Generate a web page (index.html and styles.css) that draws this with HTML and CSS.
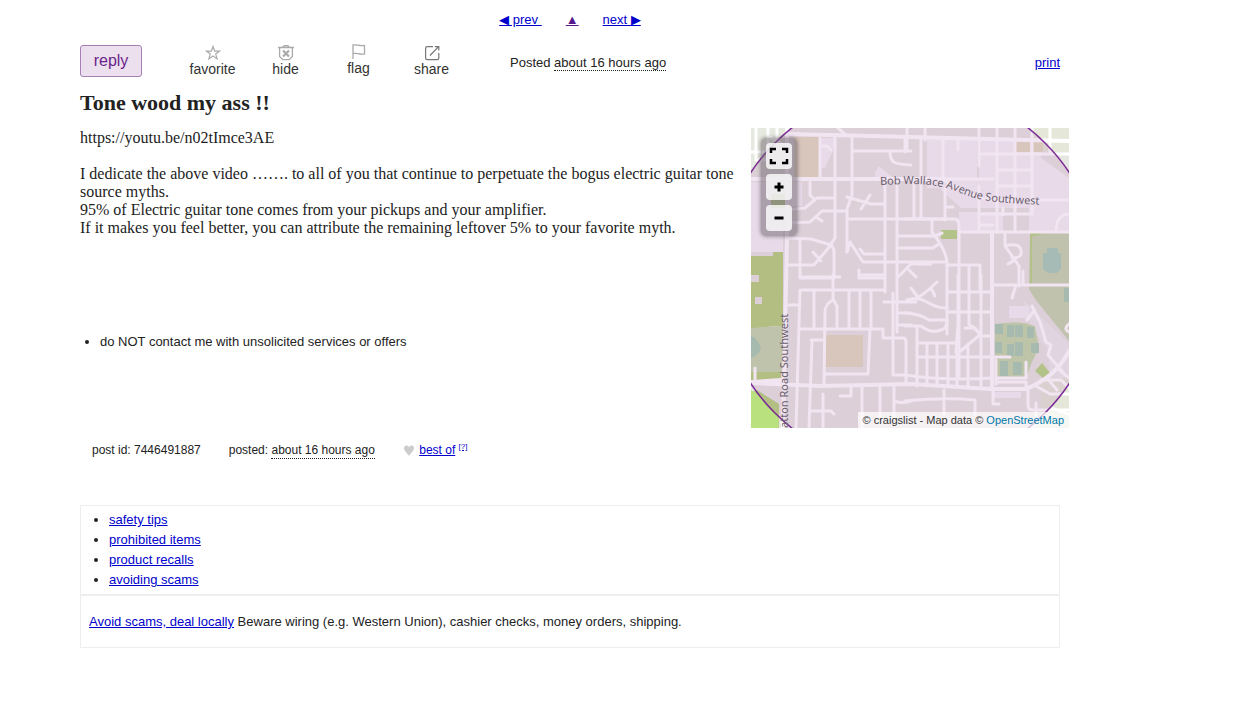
FILE: index.html
```html
<!DOCTYPE html>
<html lang="en">
<head>
  <meta charset="UTF-8">
  <meta name="viewport" content="width=device-width, initial-scale=1.0">
  <title>Tone wood my ass !!</title>
  <link rel="stylesheet" href="styles.css">
</head>
<body>
  <div class="page">
    <nav class="prevnext">
      <a href="#prev">◀ prev&nbsp;</a>
      <a href="#up" class="visited">▲</a>
      <a href="#next">next ▶</a>
    </nav>

    <header class="actions">
      <button type="button" class="reply">reply</button>
      <div class="tools">
        <button type="button" class="tool">
          <svg width="16" height="16" viewBox="0 0 16 16" fill="none" stroke="#aaa" stroke-width="1.2"><path d="M8 1.5l1.7 4.6h4.9l-3.9 3 1.4 4.8L8 11.1l-4.1 2.8 1.4-4.8-3.9-3h4.9z"/></svg>
          favorite
        </button>
        <button type="button" class="tool">
          <svg width="16" height="16" viewBox="0 0 16 16" fill="none" stroke="#aaa" stroke-width="1.3"><path d="M0 2.5h16M5 2c0-2 6-2 6 0M1.6 3v8.5l3.2 3.2h6.4l3.2-3.2V3"/><path d="M5 5.5l6 6M11 5.5l-6 6" stroke-width="2.2"/></svg>
          hide
        </button>
        <button type="button" class="tool raised">
          <svg width="16" height="16" viewBox="0 0 16 16" fill="none" stroke="#aaa" stroke-width="1.3"><path d="M2 15V1c4-1 6 1.500 11.500 .5v8.500C8 11 6 8.500 2 9.500"/></svg>
          flag
        </button>
        <button type="button" class="tool">
          <svg width="16" height="16" viewBox="0 0 16 16" fill="none" stroke="#777" stroke-width="1.2"><path d="M9 1.600H3.200Q1.600 1.600 1.600 3.200V13q0 1.600 1.600 1.600h10q1.600 0 1.600-1.600V8M6 10.500L14.600 1.600M10.800 1.600h4v4"/></svg>
          share
        </button>
      </div>
      <p class="posted">Posted <time>about 16 hours ago</time></p>
      <a href="#print" class="print">print</a>
    </header>

    <h1>Tone wood my ass !!</h1>

    <main class="posting">
      <div class="text">
        <section class="body">
          https://youtu.be/n02tImce3AE<br>
          <br>
          I dedicate the above video ……. to all of you that continue to perpetuate the bogus electric guitar tone source myths.<br>
          95% of Electric guitar tone comes from your pickups and your amplifier.<br>
          If it makes you feel better, you can attribute the remaining leftover 5% to your favorite myth.
        </section>
        <ul class="notices">
          <li>do NOT contact me with unsolicited services or offers</li>
        </ul>
      </div>

      <div class="map">
        <svg class="tiles" width="318" height="300" viewBox="0 0 318 300">
          <rect width="318" height="300" fill="#e7e7e2"/>
          <!-- commercial and open blocks -->
          <g fill="#f4f3f5">
            <path d="M0 54h32v70H0zM37 54h14v24H37zM176 10h50v42h26v20h-10l-14 8h-18l-22-20h-12zM228 12h62v60h28v32h-40V80h-50zM290 30l28 20v30h-28zM208 84h44v20h-44zM124 44l4-6 14 12h-18zM70 10h14v8l-10 22h-4zM258 178h20v12h-20zM242 264h28v6h-28z"/>
            <path d="M272 172l46 44v30l-20 20V224l-18-26z" opacity=".5"/>
          </g>
          <path d="M0 0h39v48H0z" fill="#e6e9df"/>
          <path d="M280 0h38v24h-38zM290 250h28v50h-28z" fill="#e5e8d9"/>
          <!-- parks -->
          <path d="M0 128h22v-4h10v74q-14 0-32 3z" fill="#b8d483"/>
          <path d="M20 66h14v14H20zM190 102h16v9h-16zM284 243l7-8 9 11-7 5zM302 104h16v13h-16z" fill="#b8d88a"/>
          <path d="M0 200l32-2v46H0z" fill="#c7dab0"/>
          <path d="M0 244h30v8H0zM6 262l22 14v24H0v-36z" fill="#b8d483"/>
          <path d="M0 262q16 12 27 27v11H0z" fill="#b9e27e"/>
          <path d="M279 104h39v109l-34-42-6-10z" fill="#c9d9b4"/>
          <path d="M279 104h14q-4 4-12 4v50h-2z" fill="#b8d88a"/>
          <path d="M244 196q24-4 40 2l4 22-8 16-5 14h-31z" fill="#c4dbac"/>
          <path d="M0 147h8v7H0zM4 169h7v7H4z" fill="#e7e7e2"/>
          <!-- pitches -->
          <path d="M296 120h11v5h3v16l-4 4h-9l-5-4v-16h4z" fill="#abd0bd"/>
          <path d="M0 208q7 2 10 12-3 8-10 10zM244 196h8v10h-8zM256 197h7v12h-7zM264 197h8v12h-8zM276 199h7v11h-7zM244 214h7v11h-7zM256 216h7v12h-7zM264 214h8v14h-8zM280 215h8v10h-8zM249 233h8v15h-8zM262 234h9v13h-9zM313 160h5v14h-5z" fill="#abd0b5"/>
          <!-- schools -->
          <path d="M43 9h26v41H43zM73 207h39v32H73zM265 12h14v12h-14zM282 12h10v12h-10z" fill="#e3dcc2"/>

          <g fill="none" stroke="#fff" stroke-width="3" stroke-linejoin="round" stroke-linecap="round">
            <!-- arterials -->
            <path stroke-width="4" d="M0 51H190M36 0v110l-4 190M0 255l70 3 90-2 80 5h35q30-12 43-38M241 104v157M0 254l30-2M318 13L160 9 39 6"/>
            <path d="M190 51C205 58 220 70 240 72H318M190 51h52M36 98h4"/>
            <!-- northwest -->
            <path d="M69 10v39M84 7v103l-4 6 3 6v28H49v-38M101 7v60l-5 14v43M101 23h59M139 24c0 12 6 12 21 13M87 0l8 7M70 18h6l4 4M5 0v32h12V0M17 8l14 8M26 0v20M0 24h14"/>
            <path d="M59 54v13l5 5M36 82l18-2 12-10h17M36 95l23-1 12-11h25M96 91h38M65 89l6 4M96 69l24 7h14M119 67l-9 14M36 110l24 1 20 6-17 20H36M62 124l8 9M99 114l13 20h21M99 114l-3 10M109 121l4 5h20M108 142v8h26M134 54v110"/>
            <path d="M146 52v152M134 91h60M146 108h38l7-3M146 120h36l6-4M134 134h60M146 150l14-14h20M158 142l7 7M163 52v38M170 90V12M192 10v39M181 92v12q14 18 15 30v72M194 60v32M194 79h8"/>
            <path d="M154 91h50q4 0 4 8v149M208 104h110M196 137h33v24M218 137v24M229 137v24M207 12v10M154 24v-14"/>
            <!-- northeast grid -->
            <path d="M228 0v38M246 0v104M264 0v104M281 0v86h-50M299 0v24M228 26h90M246 42h34M246 58h34M228 58v46M252 80v7M228 97h14M318 86q-13 0-13 18M174 0v12M156 0v22"/>
            <path d="M254 106v12l14 20v20M254 118q14-4 16 4t-9 8M264 132l-7 4M265 157l-4 13M241 157h77M272 157v-14M318 196q-6 5 0 8M281 178l8 16 6 20 5 3-3 10 14 16M282 184l-6 8"/>
            <!-- southwest grid -->
            <path d="M49 162l-4 138M50 162h84M63 162v38M49 201h83v9h20q3 0 3 4v43M82 147v24l4 7v22M82 172q-8 4-8 12l-1 73M98 162v38M109 162v38M120 162v38M119 201l-2 45H73M60 212h12M61 212l-3 88M37 177h12M142 165v82h13M49 149h40M110 147h24M133 174h32M146 185h14M146 197h14"/>
            <path d="M72 266v34M60 283h20l3 3M89 268h11v-9M111 259v41M129 259v30M143 259v30M143 273q8 3 17 0M4 240v11"/>
            <!-- south centre -->
            <path d="M156 172q10-4 20 2t18 6M154 185q16 1 24 7h18M154 198h16q10 8 20 4 6-1 6-10M160 174q14-8 26-20M166 168l-6-8M180 160l4 8M196 164h46M196 184h46M207 147v48l-2 30M218 160v36l12 10-24 20M230 147v110M214 200h10l6 8h12M166 200v58M166 215h40M176 216v42M186 216v42M197 216v42M206 226v32M217 216v42M166 229h74M154 247q40 6 87 3M154 273q40-4 70-1v14M193 262v24M241 229h18M245 232v24M245 250h30v-16M245 254h30v4M242 262v14h6"/>
            <path d="M277 260v18q0 4 6 4h35M285 258l14 8h19M296 250l10 12M306 240l12 10M290 252h20l8 8M285 275v18M300 280l18 6"/>
          </g>

          <circle cx="159" cy="150" r="191" fill="#800080" fill-opacity=".1" stroke="#7b2a96" stroke-width="1.500"/>

          <path id="bob-wallace" d="M129 57C170 55 185 56 205 63C225 71 230 75 300 77" fill="none"/>
          <path id="patton" d="M37 300V170" fill="none"/>
          <text class="road"><textPath href="#bob-wallace">Bob Wallace Avenue Southwest</textPath></text>
          <text class="road"><textPath href="#patton">atton Road Southwest</textPath></text>
        </svg>
        <div class="controls">
          <button type="button" aria-label="Full screen">
            <svg width="20" height="18" viewBox="0 0 20 18" fill="none" stroke="#000" stroke-width="2.500"><path d="M2 6V2h5M13 2h5v4M18 12v4h-5M7 16H2v-4"/></svg>
          </button>
          <button type="button" aria-label="Zoom in">
            <svg width="10" height="10" viewBox="0 0 10 10" stroke="#000" stroke-width="3"><path d="M5 .5v9M.5 5h9"/></svg>
          </button>
          <button type="button" aria-label="Zoom out">
            <svg width="10" height="10" viewBox="0 0 10 10" stroke="#000" stroke-width="3"><path d="M.5 5h9"/></svg>
          </button>
        </div>
        <p class="attribution">© craigslist - Map data © <a href="#osm">OpenStreetMap</a></p>
      </div>
    </main>

    <div class="postinginfos">
      <p>post id: 7446491887</p>
      <p>posted: <time>about 16 hours ago</time></p>
      <p class="bestof">
        <svg width="12" height="11" viewBox="0 0 12 11" fill="#ccc"><path d="M6 11C4 7.500 1 6 1 3 1 0 5-.5 6 2.500 7-.5 11 0 11 3c0 3-3 4.500-5 8z"/></svg>
        <a href="#best">best of</a> <a href="#about" class="help">[?]</a>
      </p>
    </div>

    <footer class="tips">
      <ul>
        <li><a href="#safety">safety tips</a></li>
        <li><a href="#prohibited">prohibited items</a></li>
        <li><a href="#recalls">product recalls</a></li>
        <li><a href="#scams">avoiding scams</a></li>
      </ul>
      <p><a href="#local">Avoid scams, deal locally</a> Beware wiring (e.g. Western Union), cashier checks, money orders, shipping.</p>
    </footer>
  </div>
</body>
</html>
```
FILE: styles.css
```css
/* General */
body {
  margin: 0;
  font-family: "Liberation Sans", Arial, sans-serif;
  font-size: 13px;
  line-height: 20px;
  color: #222;
  background: #fff;
}

.page {
  padding: 10px 186px 60px 80px;
}

p, ul, h1 {
  margin: 0;
}

a {
  color: #0000cc;
}

a.visited {
  color: #551a8b;
}

button {
  font-family: inherit;
  cursor: pointer;
}

time {
  display: inline-block;
  line-height: 15px;
  border-bottom: 1px dotted #222;
}

/* Top links */
.prevnext {
  display: flex;
  justify-content: center;
  gap: 24px;
}

/* Action bar */
.actions {
  display: flex;
  align-items: flex-start;
  margin-top: 12px;
}

.reply {
  width: 62px;
  height: 32px;
  margin-top: 3px;
  padding: 0;
  font-size: 16px;
  color: #6a1f8a;
  background: #ece0ee;
  border: 1px solid #a77fb5;
  border-radius: 3px;
}

.tools {
  display: flex;
  width: 292px;
  margin-left: 34px;
}

.tool {
  flex: 1;
  display: flex;
  flex-direction: column;
  align-items: center;
  padding: 3px 0 0;
  font-size: 14px;
  line-height: 16px;
  color: #333;
  background: none;
  border: none;
}

.raised {
  padding-top: 2px;
}

.posted {
  margin: 11px 0 0 42px;
}

.print {
  margin: 11px 0 0 auto;
}

h1 {
  margin-top: 12px;
  font-family: "Liberation Serif", "Times New Roman", serif;
  font-size: 22px;
  line-height: 28px;
}

/* Posting */
.posting {
  display: flex;
  justify-content: space-between;
  gap: 16px;
  margin: 11px -9px 0 0;
}

.text {
  flex: 1;
  padding-top: 1px;
}

.body {
  font-family: "Liberation Serif", "Times New Roman", serif;
  font-size: 16px;
  line-height: 18px;
}

.notices {
  margin-top: 95px;
  padding-left: 20px;
}

/* Map */
.map {
  position: relative;
  flex: none;
  height: 300px;
  overflow: hidden;
}

.tiles {
  display: block;
}

.road {
  font-family: "Noto Sans", sans-serif;
  font-size: 11px;
  fill: #6b5f6e;
}

.controls {
  position: absolute;
  top: 10px;
  left: 10px;
  display: flex;
  flex-direction: column;
  gap: 5px;
  padding: 5px;
  background: rgba(110, 100, 110, 0.5);
  border-radius: 5px;
  box-shadow: 0 0 4px rgba(60, 50, 60, 0.6);
}

.controls button {
  display: flex;
  align-items: center;
  justify-content: center;
  width: 26px;
  height: 26px;
  padding: 0;
  background: rgba(255, 255, 255, 0.8);
  border: none;
  border-radius: 4px;
}

.attribution {
  position: absolute;
  right: 0;
  bottom: 0;
  padding: 0 5px;
  font-size: 11px;
  line-height: 16px;
  color: #333;
  background: rgba(255, 255, 255, 0.7);
}

.attribution a {
  color: #0078a8;
  text-decoration: none;
}

/* Post details */
.postinginfos {
  display: flex;
  gap: 28px;
  margin-top: 12px;
  padding-left: 12px;
  font-size: 12px;
}

.bestof svg {
  margin-right: 1px;
  vertical-align: -2px;
}

.help {
  font-size: 8px;
  line-height: 8px;
  vertical-align: 5px;
}

/* Safety tips */
.tips {
  margin-top: 45px;
  border: 1px solid #eee;
}

.tips ul {
  padding: 4px 0 4px 28px;
  border-bottom: 2px solid #eee;
}

.tips p {
  padding: 16px 8px 15px;
}
```
